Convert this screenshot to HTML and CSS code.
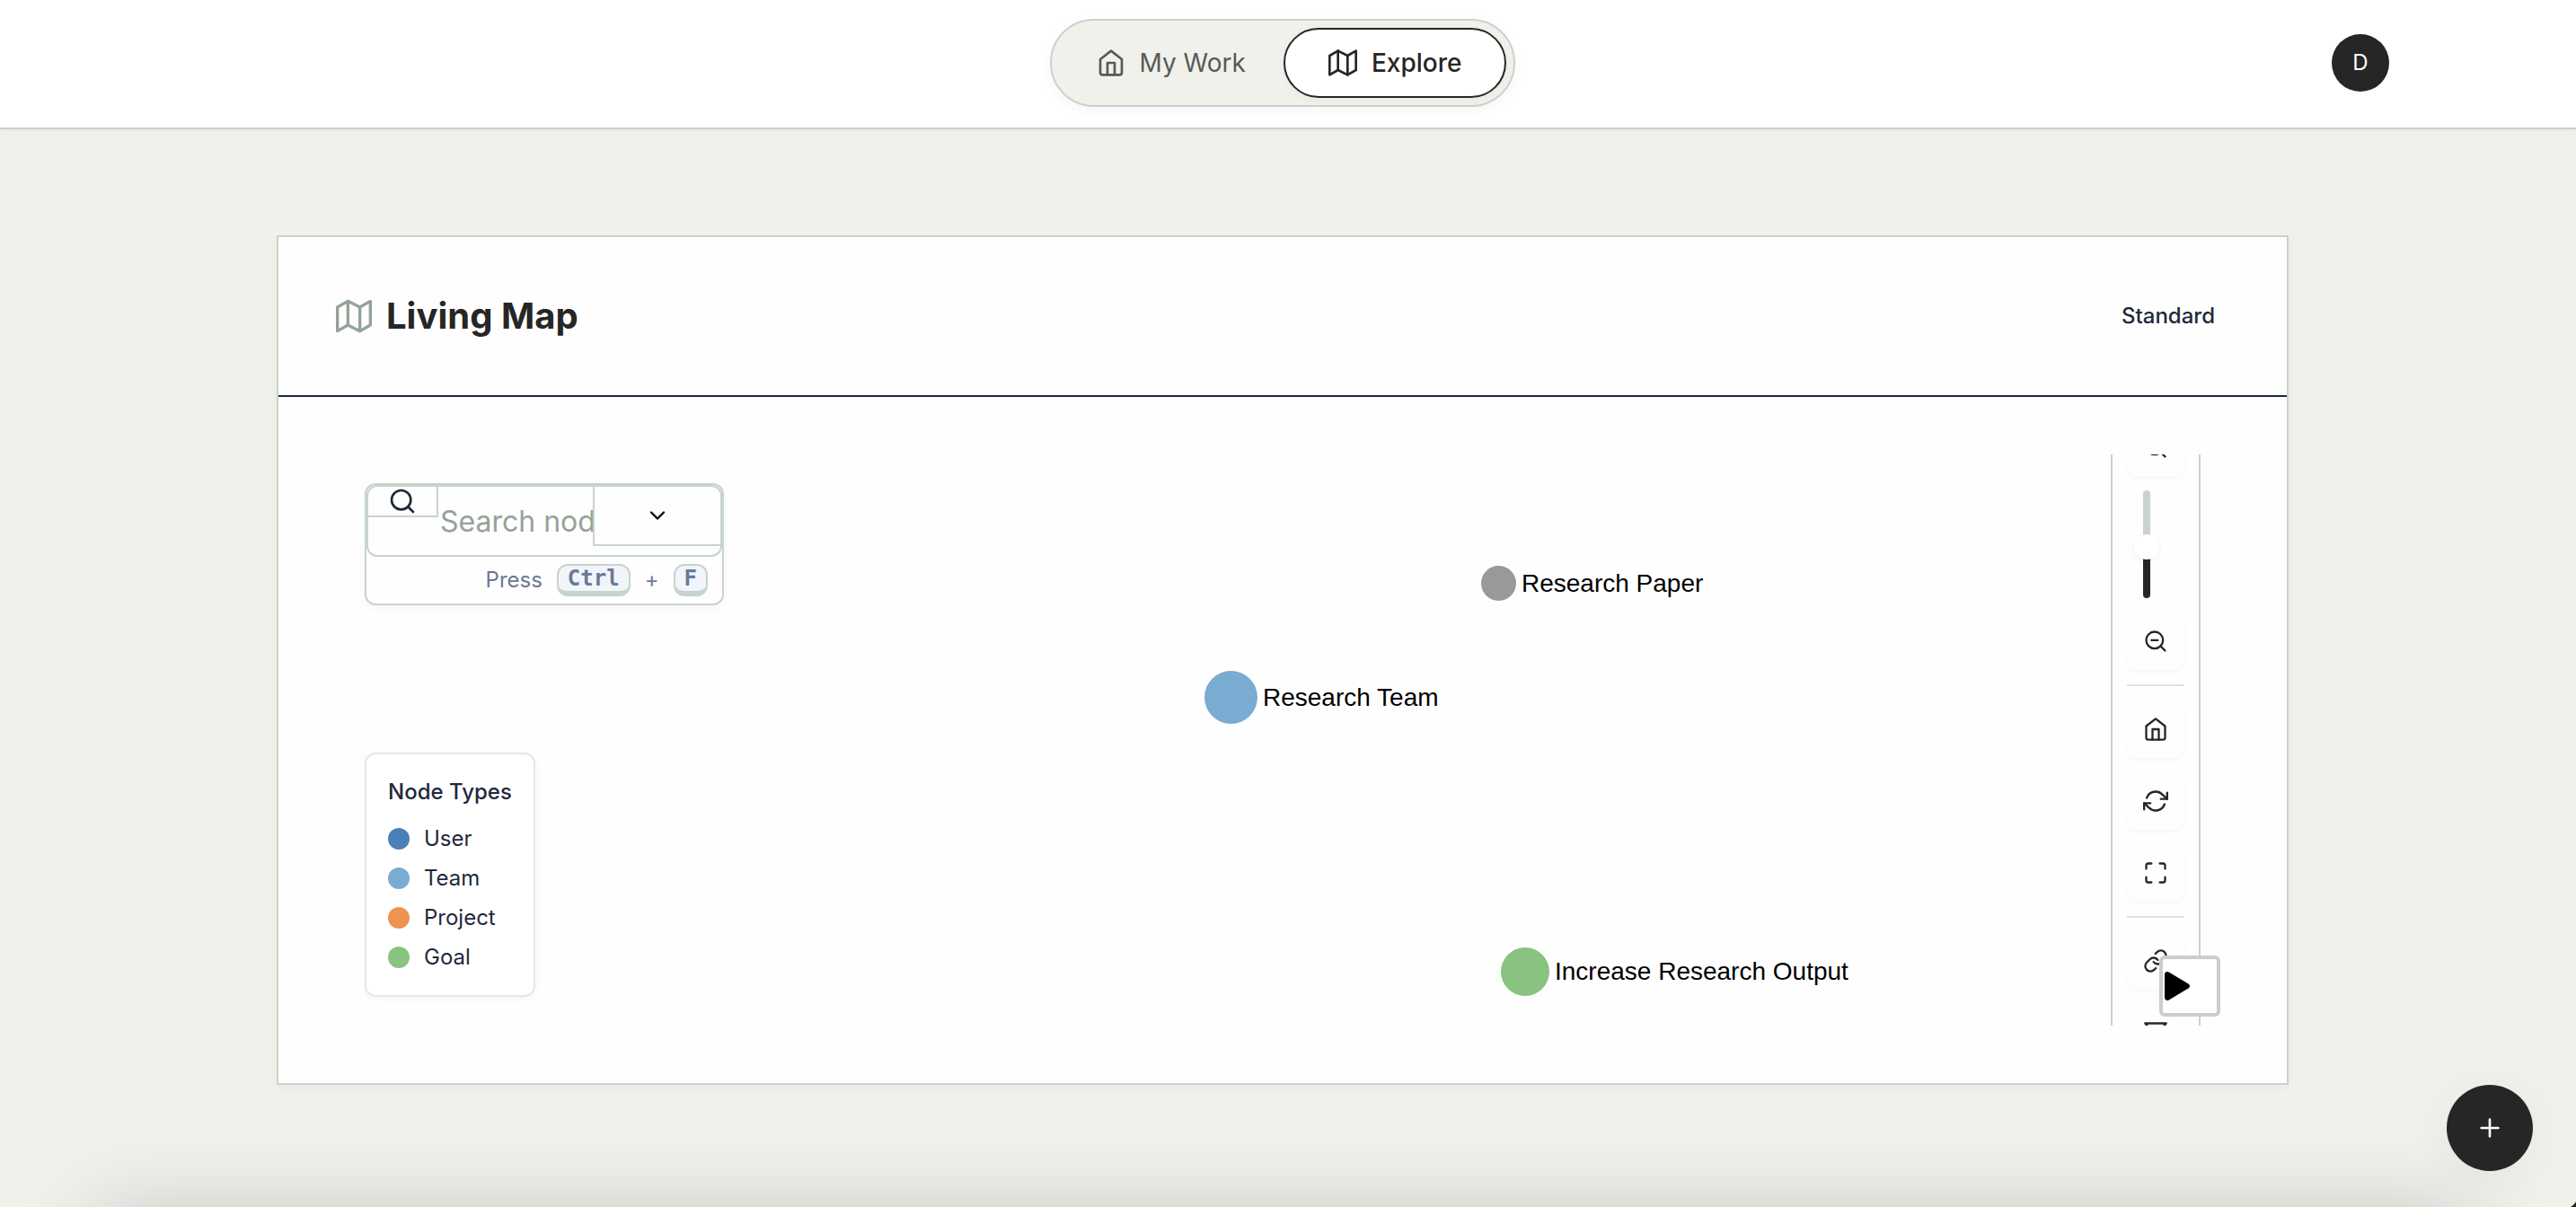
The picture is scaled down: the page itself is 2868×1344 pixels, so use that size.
FILE: index.html
```html
<!DOCTYPE html>
<html lang="en">
<head>
<meta charset="utf-8">
<meta name="viewport" content="width=device-width, initial-scale=1">
<title>Living Map</title>
<link rel="stylesheet" href="styles.css">
</head>
<body>
<svg class="sprite" aria-hidden="true">
  <symbol id="i-home" viewBox="0 0 24 24"><path d="M3 9l9-7 9 7v11a2 2 0 0 1-2 2H5a2 2 0 0 1-2-2z"/><path d="M9 22V12h6v10"/></symbol>
  <symbol id="i-map" viewBox="0 0 24 24"><path d="M1 6v16l7-4 8 4 7-4V2l-7 4-8-4-7 4z"/><path d="M8 2v16M16 6v16"/></symbol>
  <symbol id="i-search" viewBox="0 0 24 24"><circle cx="11" cy="11" r="8"/><path d="M21 21l-4.35-4.35"/></symbol>
  <symbol id="i-chevron" viewBox="0 0 24 24"><path d="M6 9l6 6 6-6"/></symbol>
  <symbol id="i-zoom-in" viewBox="0 0 24 24"><circle cx="11" cy="11" r="8"/><path d="M21 21l-4.35-4.35M11 8v6M8 11h6"/></symbol>
  <symbol id="i-zoom-out" viewBox="0 0 24 24"><circle cx="11" cy="11" r="8"/><path d="M21 21l-4.35-4.35M8 11h6"/></symbol>
  <symbol id="i-refresh" viewBox="0 0 24 24"><path d="M23 4v6h-6M1 20v-6h6"/><path d="M3.51 9a9 9 0 0 1 14.85-3.36L23 10M1 14l4.64 4.36A9 9 0 0 0 20.49 15"/></symbol>
  <symbol id="i-maximize" viewBox="0 0 24 24"><path d="M8 3H5a2 2 0 0 0-2 2v3m18 0V5a2 2 0 0 0-2-2h-3m0 18h3a2 2 0 0 0 2-2v-3M3 16v3a2 2 0 0 0 2 2h3"/></symbol>
  <symbol id="i-link" viewBox="0 0 24 24"><path d="M10 13a5 5 0 0 0 7.54.54l3-3a5 5 0 0 0-7.07-7.07l-1.72 1.71"/><path d="M14 11a5 5 0 0 0-7.54-.54l-3 3a5 5 0 0 0 7.07 7.07l1.71-1.71"/></symbol>
  <symbol id="i-filter" viewBox="0 0 24 24"><path d="M22 3H2l8 9.46V19l4 2v-8.54z"/></symbol>
  <symbol id="i-plus" viewBox="0 0 24 24"><path d="M12 5v14M5 12h14"/></symbol>
</svg>

<header class="topbar">
  <div class="topbar-inner">
    <nav class="tabs" aria-label="Main">
      <a class="tab" href="#work"><svg class="icon"><use href="#i-home"/></svg>My Work</a>
      <a class="tab tab-active" href="#explore" aria-current="page"><svg class="icon"><use href="#i-map"/></svg>Explore</a>
    </nav>
    <button class="avatar" type="button" aria-label="Account">D</button>
  </div>
</header>

<main class="page">
  <section class="card">
    <div class="card-header">
      <h1 class="card-title"><svg class="icon icon-title"><use href="#i-map"/></svg>Living Map</h1>
      <button class="mode" type="button">Standard</button>
    </div>
    <div class="card-body">
      <div class="canvas">
        <div class="node node-paper"><span class="disc"></span>Research Paper</div>
        <div class="node node-team"><span class="disc"></span>Research Team</div>
        <div class="node node-goal"><span class="disc"></span>Increase Research Output</div>

        <form class="search">
          <div class="search-row">
            <button class="search-submit" type="button" aria-label="Search"><svg class="icon"><use href="#i-search"/></svg></button>
            <input class="search-input" type="text" placeholder="Search nodes..." aria-label="Search nodes">
            <button class="search-toggle" type="button" aria-label="Filters"><svg class="icon icon-small"><use href="#i-chevron"/></svg></button>
          </div>
          <div class="search-hint"><span>Press</span><kbd>Ctrl</kbd><span>+</span><kbd>F</kbd></div>
        </form>

        <aside class="legend">
          <h2 class="legend-title">Node Types</h2>
          <ul class="legend-list">
            <li><span class="dot dot-user"></span>User</li>
            <li><span class="dot dot-team"></span>Team</li>
            <li><span class="dot dot-project"></span>Project</li>
            <li><span class="dot dot-goal"></span>Goal</li>
          </ul>
        </aside>

        <div class="controls">
          <button class="control" type="button" aria-label="Zoom in"><svg class="icon icon-small"><use href="#i-zoom-in"/></svg></button>
          <div class="zoom"><input class="zoom-input" type="range" min="0" max="100" value="47" aria-label="Zoom level"></div>
          <button class="control" type="button" aria-label="Zoom out"><svg class="icon icon-small"><use href="#i-zoom-out"/></svg></button>
          <hr class="rule">
          <button class="control" type="button" aria-label="Home"><svg class="icon icon-small"><use href="#i-home"/></svg></button>
          <button class="control" type="button" aria-label="Refresh"><svg class="icon icon-small"><use href="#i-refresh"/></svg></button>
          <button class="control" type="button" aria-label="Full screen"><svg class="icon icon-small"><use href="#i-maximize"/></svg></button>
          <hr class="rule">
          <button class="control" type="button" aria-label="Links"><svg class="icon icon-small"><use href="#i-link"/></svg></button>
          <button class="control" type="button" aria-label="Filter"><svg class="icon icon-small"><use href="#i-filter"/></svg></button>
        </div>

        <button class="play" type="button" aria-label="Play"><svg class="play-icon" viewBox="0 0 28 32"><path d="M0 3.2C0 .6 2.6-.8 4.8.6l21.600 12.800c2.100 1.300 2.100 3.900 0 5.200L4.800 31.400C2.600 32.800 0 31.400 0 28.800z"/></svg></button>
      </div>
    </div>
  </section>
</main>

<div class="dock-shadow"></div>
<button class="fab" type="button" aria-label="Add"><svg class="icon"><use href="#i-plus"/></svg></button>
<div class="window-corner"></div>
</body>
</html>
```
FILE: styles.css
```css
:root {
  --bg: #f0f1eb;
  --surface: #fefefe;
  --line: #c7d4cb;
  --ink: #262626;
  --navy: #1e293b;
  --muted: #6b7894;
  --sage: #94a398;
}

* { box-sizing: border-box; }

body {
  margin: 0;
  min-height: 100vh;
  display: flex;
  flex-direction: column;
  overflow: hidden;
  background: var(--bg);
  color: var(--navy);
  font: 24px/36px Inter, "Liberation Sans", sans-serif;
}

button {
  margin: 0;
  padding: 0;
  border: 0;
  background: none;
  color: inherit;
  font: inherit;
  cursor: pointer;
}

.sprite { position: absolute; width: 0; height: 0; }

.icon {
  width: 32px;
  height: 32px;
  flex: none;
  fill: none;
  stroke: currentColor;
  stroke-width: 2;
  stroke-linecap: round;
  stroke-linejoin: round;
}
.icon-small { width: 28px; height: 28px; }
.icon-title { width: 40px; height: 40px; color: var(--sage); }

/* Top bar */
.topbar {
  height: 144px;
  padding: 0 12px 2px 0;
  display: flex;
  justify-content: center;
  background: #fff;
  border-bottom: 2px solid var(--line);
  box-shadow: 0 2px 4px rgba(0, 0, 0, .03);
}
.topbar-inner {
  width: 100%;
  max-width: 2464px;
  display: grid;
  grid-template-columns: 1fr auto 1fr;
  align-items: center;
}
.tabs {
  grid-column: 2;
  height: 98px;
  padding: 8px;
  display: flex;
  background: var(--bg);
  border: 2px solid var(--line);
  border-radius: 49px;
  box-shadow: 0 4px 16px rgba(0, 0, 0, .04);
}
.tab {
  padding: 0 40px;
  display: flex;
  align-items: center;
  gap: 16px;
  border: 2px solid transparent;
  border-radius: 39px;
  color: #595959;
  font-size: 28px;
  text-decoration: none;
}
.tab-active {
  padding: 0 48px;
  background: #fff;
  border-color: var(--ink);
  color: var(--ink);
  font-weight: 500;
  box-shadow: 0 2px 8px rgba(0, 0, 0, .04);
}
.avatar {
  justify-self: end;
  width: 64px;
  height: 64px;
  border-radius: 50%;
  background: var(--ink);
  color: #fff;
}

/* Map card */
.page {
  flex: 1;
  padding: 118px 12px 136px 0;
  display: flex;
  justify-content: center;
}
.card {
  width: 100%;
  max-width: 2240px;
  display: flex;
  flex-direction: column;
  background: var(--surface);
  border: 2px solid var(--line);
  box-shadow: 0 4px 8px rgba(0, 0, 0, .03);
}
.card-header {
  padding: 64px;
  display: flex;
  align-items: center;
  justify-content: space-between;
  border-bottom: 2px solid var(--navy);
}
.card-title {
  margin: 0;
  display: flex;
  align-items: center;
  gap: 16px;
  color: var(--ink);
  font-size: 40px;
  line-height: 48px;
  font-weight: 700;
}
.mode { padding: 0 16px; font-weight: 500; }
.card-body {
  flex: 1;
  padding: 64px;
  display: flex;
}
.canvas {
  position: relative;
  flex: 1;
  min-height: 600px;
  overflow: hidden;
}

/* Graph nodes */
.node {
  position: absolute;
  display: flex;
  align-items: center;
  gap: 6px;
  color: #000;
  font: 28px/32px "Liberation Sans", Arial, sans-serif;
  white-space: nowrap;
}
.disc { border-radius: 50%; }
.node-paper { left: 1275px; top: 124px; }
.node-paper .disc { width: 39px; height: 39px; background: #999; }
.node-team { left: 967px; top: 241px; }
.node-team .disc { width: 59px; height: 59px; background: #7aabd1; }
.node-goal { left: 1297px; top: 549px; }
.node-goal .disc { width: 54px; height: 54px; background: #88c37f; }

/* Search */
.search {
  position: absolute;
  left: 32px;
  top: 32px;
  width: 400px;
  height: 136px;
  border: 2px solid var(--line);
  border-radius: 12px;
  box-shadow: 0 4px 8px rgba(0, 0, 0, .03);
}
.search-row {
  height: 80px;
  display: flex;
  align-items: flex-start;
  overflow: hidden;
  border: 2px solid var(--line);
  border-radius: 12px;
}
.search-submit,
.search-toggle {
  flex: none;
  display: flex;
  align-items: center;
  justify-content: center;
  border: 0 solid var(--line);
}
.search-submit {
  width: 78px;
  height: 34px;
  border-width: 0 2px 2px 0;
}
.search-toggle {
  width: 142px;
  height: 66px;
  border-width: 0 0 2px 2px;
  color: #000;
}
.search-input {
  flex: 1;
  min-width: 0;
  height: 76px;
  padding: 0 0 0 2px;
  border: 0;
  outline: 0;
  background: none;
  color: var(--navy);
  font: inherit;
  font-size: 32px;
}
.search-input::placeholder { color: var(--sage); opacity: 1; }
.search-hint {
  height: 52px;
  padding-right: 16px;
  display: flex;
  align-items: center;
  justify-content: flex-end;
  gap: 16px;
  color: var(--muted);
}
kbd {
  height: 36px;
  padding: 0 10px;
  background: #f1f5fb;
  border: 2px solid var(--line);
  border-bottom-width: 6px;
  border-radius: 12px;
  font: bold 24px/28px "DejaVu Sans Mono", monospace;
}

/* Legend */
.legend {
  position: absolute;
  left: 32px;
  bottom: 32px;
  padding: 24px;
  background: #fff;
  border: 2px solid #e2e8f0;
  border-radius: 12px;
  box-shadow: 0 2px 8px rgba(0, 0, 0, .04);
}
.legend-title {
  margin: 0 0 16px;
  font-size: 24px;
  font-weight: 500;
}
.legend-list {
  margin: 0;
  padding: 0;
  display: grid;
  gap: 8px;
  list-style: none;
}
.legend-list li {
  display: flex;
  align-items: center;
  gap: 16px;
}
.dot { width: 24px; height: 24px; border-radius: 50%; }
.dot-user { background: #4a80b8; }
.dot-team { background: #7aabd1; }
.dot-project { background: #ee9350; }
.dot-goal { background: #88c37f; }

/* Map controls */
.controls {
  position: absolute;
  right: 32px;
  top: 50%;
  transform: translateY(-50%);
  width: 100px;
  padding: 16px;
  display: flex;
  flex-direction: column;
  gap: 16px;
  border: 2px solid var(--line);
  border-radius: 12px;
}
.control {
  width: 64px;
  height: 64px;
  display: flex;
  align-items: center;
  justify-content: center;
  border-radius: 12px;
  background: var(--surface);
  color: var(--ink);
  box-shadow: 0 2px 6px rgba(0, 0, 0, .03);
}
.rule {
  width: 64px;
  height: 2px;
  margin: 0;
  border: 0;
  background: #dce3de;
}

/* The track sits behind a wider input so that the thumb stays centred on it */
.zoom {
  width: 44px;
  height: 120px;
  display: grid;
  justify-items: center;
}
.zoom::before {
  content: "";
  grid-area: 1 / 1;
  width: 8px;
  height: 120px;
  border-radius: 4px;
  background: linear-gradient(var(--line) 50%, var(--ink) 50%);
}
.zoom-input {
  grid-area: 1 / 1;
  z-index: 1;
  appearance: none;
  writing-mode: vertical-lr;
  direction: rtl;
  width: 28px;
  height: 120px;
  margin: 0;
  background: none;
}
.zoom-input::-webkit-slider-thumb {
  appearance: none;
  width: 28px;
  height: 28px;
  border-radius: 50%;
  background: #fff;
  box-shadow: 0 2px 6px rgba(0, 0, 0, .06);
}

.play {
  position: absolute;
  right: 10px;
  bottom: 10px;
  width: 68px;
  height: 68px;
  padding-left: 2px;
  display: flex;
  align-items: center;
  background: #fff;
  border: 4px solid #ccc;
  border-radius: 6px;
}
.play-icon { width: 28px; height: 32px; fill: #000; }

/* Floating layer */
.fab {
  position: fixed;
  right: 48px;
  bottom: 40px;
  width: 96px;
  height: 96px;
  display: flex;
  align-items: center;
  justify-content: center;
  border-radius: 50%;
  background: var(--ink);
  color: #fff;
  box-shadow: 0 8px 48px rgba(60, 70, 40, .06);
}
.dock-shadow {
  position: fixed;
  left: 110px;
  right: 122px;
  top: calc(100% + 16px);
  height: 200px;
  box-shadow: 0 0 100px rgba(0, 0, 0, .22);
}
.window-corner {
  position: fixed;
  right: 0;
  bottom: 0;
  width: 20px;
  height: 20px;
  background: radial-gradient(circle at 0 0, transparent 24px, #1c2a10 25px);
}
```
